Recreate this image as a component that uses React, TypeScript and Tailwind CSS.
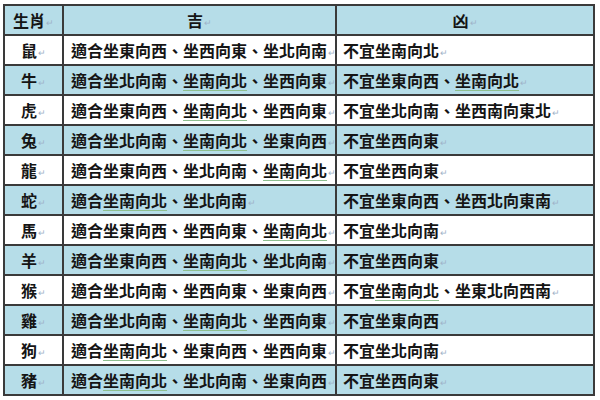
import React from "react";

type Row = { z: string; good: string; bad: string; cyan: boolean };

const rows: Row[] = [
  { z: "鼠", good: "適合坐東向西、坐西向東、坐北向南", bad: "不宜坐南向北", cyan: false },
  { z: "牛", good: "適合坐北向南、坐南向北、坐西向東", bad: "不宜坐東向西、坐南向北", cyan: true },
  { z: "虎", good: "適合坐東向西、坐南向北、坐西向東", bad: "不宜坐北向南、坐西南向東北", cyan: false },
  { z: "兔", good: "適合坐北向南、坐南向北、坐東向西", bad: "不宜坐西向東", cyan: true },
  { z: "龍", good: "適合坐東向西、坐北向南、坐南向北", bad: "不宜坐西向東", cyan: false },
  { z: "蛇", good: "適合坐南向北、坐北向南", bad: "不宜坐東向西、坐西北向東南", cyan: true },
  { z: "馬", good: "適合坐東向西、坐西向東、坐南向北", bad: "不宜坐北向南", cyan: false },
  { z: "羊", good: "適合坐東向西、坐南向北、坐北向南", bad: "不宜坐西向東", cyan: true },
  { z: "猴", good: "適合坐北向南、坐西向東、坐東向西", bad: "不宜坐南向北、坐東北向西南", cyan: false },
  { z: "雞", good: "適合坐北向南、坐南向北、坐西向東", bad: "不宜坐東向西", cyan: true },
  { z: "狗", good: "適合坐南向北、坐東向西、坐西向東", bad: "不宜坐北向南", cyan: false },
  { z: "豬", good: "適合坐南向北、坐北向南、坐東向西", bad: "不宜坐西向東", cyan: true },
];

function Marked({ text, mark }: { text: string; mark: boolean }) {
  if (!mark) return <>{text}</>;
  const key = "坐南向北";
  const i = text.indexOf(key, 2);
  if (i < 0) return <>{text}</>;
  return (
    <>
      {text.slice(0, i)}
      <span className="underline decoration-[#8fbf8f] decoration-1 underline-offset-[3px]">{key}</span>
      {text.slice(i + key.length)}
    </>
  );
}

function Pm() {
  return <span className="text-[9px] font-normal text-[#9fb3c8] align-middle ml-[1px]">↵</span>;
}

export default function App() {
  const font = { fontFamily: '"Noto Sans CJK TC", "Noto Sans CJK SC", sans-serif' };
  return (
    <div className="w-[600px] h-[400px] bg-white overflow-hidden pt-[4px] pl-[3px]" style={font}>
      <table className="border-collapse w-[590px] table-fixed text-[16px] leading-none text-[#151515] font-bold">
        <colgroup>
          <col className="w-[59px]" />
          <col className="w-[273px]" />
          <col className="w-[258px]" />
        </colgroup>
        <tbody>
          <tr className="h-[30px] bg-[#b6dde8]">
            <td className="border-2 border-[#3a3a3a] text-center">生肖<Pm /></td>
            <td className="border-2 border-[#3a3a3a] text-center">吉<Pm /></td>
            <td className="border-2 border-[#3a3a3a] text-center">凶<Pm /></td>
          </tr>
          {rows.map((r) => (
            <tr key={r.z} className={r.cyan ? "h-[30px] bg-[#b6dde8]" : "h-[30px] bg-white"}>
              <td className="border-2 border-[#3a3a3a] text-center">{r.z}<Pm /></td>
              <td className="border-2 border-[#3a3a3a] pl-[7px] whitespace-nowrap">
                <Marked text={r.good} mark={true} />
                <Pm />
              </td>
              <td className="border-2 border-[#3a3a3a] pl-[6px] whitespace-nowrap">
                <Marked text={r.bad} mark={r.z === "牛" || r.z === "猴"} />
                <Pm />
              </td>
            </tr>
          ))}
        </tbody>
      </table>
    </div>
  );
}
